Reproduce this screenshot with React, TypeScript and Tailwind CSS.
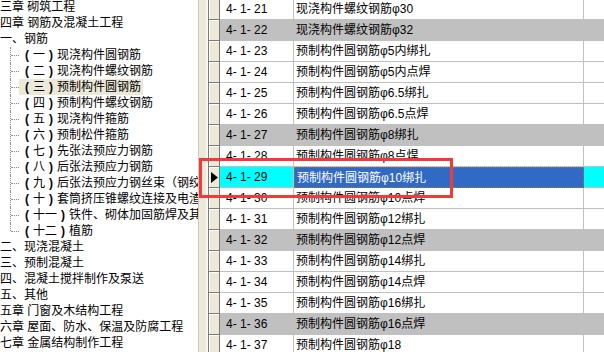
import React from 'react';

type TreeNode = {
  kind: 'ch' | 'l1' | 'l2';
  text: string;
  num?: string;
  selected?: boolean;
  first?: boolean;
  last?: boolean;
};

const TREE: TreeNode[] = [
  { kind: 'ch', text: '第三章 砌筑工程' },
  { kind: 'ch', text: '第四章 钢筋及混凝土工程' },
  { kind: 'l1', text: '一、钢筋' },
  { kind: 'l2', num: '一', text: '现浇构件圆钢筋', first: true },
  { kind: 'l2', num: '二', text: '现浇构件螺纹钢筋' },
  { kind: 'l2', num: '三', text: '预制构件圆钢筋', selected: true },
  { kind: 'l2', num: '四', text: '预制构件螺纹钢筋' },
  { kind: 'l2', num: '五', text: '现浇构件箍筋' },
  { kind: 'l2', num: '六', text: '预制松件箍筋' },
  { kind: 'l2', num: '七', text: '先张法预应力钢筋' },
  { kind: 'l2', num: '八', text: '后张法预应力钢筋' },
  { kind: 'l2', num: '九', text: '后张法预应力钢丝束（钢绞线）' },
  { kind: 'l2', num: '十', text: '套筒挤压锥螺纹连接及电渣压力焊' },
  { kind: 'l2', num: '十一', text: '铁件、砌体加固筋焊及其他' },
  { kind: 'l2', num: '十二', text: '植筋', last: true },
  { kind: 'l1', text: '二、现浇混凝土' },
  { kind: 'l1', text: '三、预制混凝土' },
  { kind: 'l1', text: '四、混凝土搅拌制作及泵送' },
  { kind: 'l1', text: '五、其他' },
  { kind: 'ch', text: '第五章 门窗及木结构工程' },
  { kind: 'ch', text: '第六章 屋面、防水、保温及防腐工程' },
  { kind: 'ch', text: '第七章 金属结构制作工程' },
];

const ROWS: { n: number; name: string; gray?: boolean; sel?: boolean }[] = [
  { n: 21, name: '现浇构件螺纹钢筋φ30' },
  { n: 22, name: '现浇构件螺纹钢筋φ32', gray: true },
  { n: 23, name: '预制构件圆钢筋φ5内绑扎' },
  { n: 24, name: '预制构件圆钢筋φ5内点焊' },
  { n: 25, name: '预制构件圆钢筋φ6.5绑扎' },
  { n: 26, name: '预制构件圆钢筋φ6.5点焊' },
  { n: 27, name: '预制构件圆钢筋φ8绑扎', gray: true },
  { n: 28, name: '预制构件圆钢筋φ8点焊' },
  { n: 29, name: '预制构件圆钢筋φ10绑扎', sel: true },
  { n: 30, name: '预制构件圆钢筋φ10点焊' },
  { n: 31, name: '预制构件圆钢筋φ12绑扎' },
  { n: 32, name: '预制构件圆钢筋φ12点焊', gray: true },
  { n: 33, name: '预制构件圆钢筋φ14绑扎' },
  { n: 34, name: '预制构件圆钢筋φ14点焊' },
  { n: 35, name: '预制构件圆钢筋φ16绑扎' },
  { n: 36, name: '预制构件圆钢筋φ16点焊', gray: true },
  { n: 37, name: '预制构件圆钢筋φ18' },
];

function TreeRow({ node }: { node: TreeNode }) {
  if (node.kind === 'ch') {
    return <div className="h-[16px] -ml-[12px] whitespace-pre">{node.text}</div>;
  }
  if (node.kind === 'l1') {
    return <div className="h-[16px] whitespace-pre">{node.text}</div>;
  }
  return (
    <div className="relative h-[16px] pl-[19px] whitespace-pre">
      {/* tree connector lines */}
      <span
        className={`absolute left-[10px] top-0 border-l border-dotted border-[#8a8a8a] ${node.last ? 'h-[8px]' : 'h-[16px]'}`}
      />
      <span className="absolute left-[11px] top-[8px] w-[8px] border-t border-dotted border-[#8a8a8a]" />
      <span className={`inline-flex h-[16px] items-center px-[2px] ${node.selected ? 'bg-[#ece9d8]' : ''}`}>
        <span className="inline-block w-[12px] text-center font-bold">(</span>
        <span>{node.num}</span>
        <span className="inline-block w-[12px] text-center font-bold">)</span>
        <span>{node.text}</span>
      </span>
    </div>
  );
}

export default function App() {
  return (
    <div className="relative flex h-[352px] w-[604px] overflow-hidden bg-white text-[12px] leading-[16px] text-black font-['Liberation_Sans','Noto_Sans_CJK_SC',sans-serif]">
      {/* Left: chapter tree */}
      <div className="w-[198px] shrink-0 overflow-hidden">
        <div className="-mt-[1px]">
          {TREE.map((node, i) => (
            <TreeRow key={i} node={node} />
          ))}
        </div>
      </div>

      {/* Splitter */}
      <div className="w-[10px] shrink-0 border-l border-[#c8c8c8] border-r-2 border-r-[#f8f7f1] bg-[#ece9d8]" />

      {/* Right: quota grid */}
      <div className="flex-1 overflow-hidden">
        <div className="-mt-[1px]">
          {ROWS.map((r) => {
            const rowBg = r.gray ? 'bg-[#c0c0c0]' : 'bg-white';
            return (
              <div key={r.n} className="flex h-[21px]">
                <div className="flex w-[12px] shrink-0 items-center justify-center border-x border-b border-[#7a7a7a] bg-[#ece9d8] shadow-[inset_1px_1px_0_#ffffff]">
                  {r.sel && (
                    <svg width="7" height="11" viewBox="0 0 7 11">
                      <polygon points="0,0 7,5.5 0,11" fill="#000" />
                    </svg>
                  )}
                </div>
                <div
                  className={`flex w-[74px] shrink-0 items-center whitespace-pre border-r border-b border-[#c0c0c0] pl-[6px] ${r.sel ? 'bg-[#00ffff]' : rowBg}`}
                >
                  4- 1- {r.n}
                </div>
                <div
                  className={`flex w-[290px] shrink-0 items-center whitespace-pre pl-[2px] ${
                    r.sel
                      ? 'border border-dotted border-[#9a7a30] bg-[#316ac5] text-white'
                      : `border-r border-b border-[#c0c0c0] ${rowBg}`
                  }`}
                >
                  {r.name}
                </div>
                <div className={`flex-1 border-b border-[#c0c0c0] ${r.sel ? 'bg-[#00ffff]' : rowBg}`} />
              </div>
            );
          })}
        </div>
      </div>

      {/* Red annotation box */}
      <div className="pointer-events-none absolute left-[199px] top-[158px] h-[40px] w-[254px] border-[3px] border-[#f03b3b]" />
    </div>
  );
}
